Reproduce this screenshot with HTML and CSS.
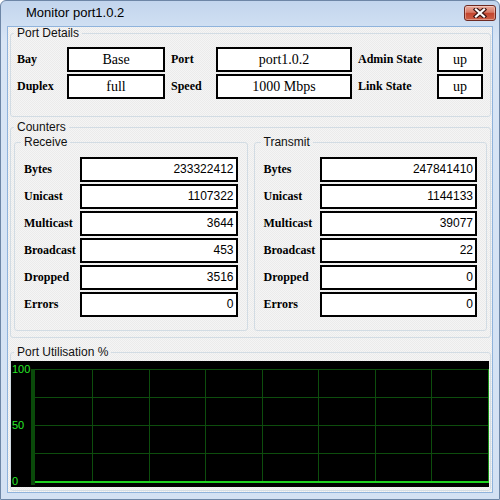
FILE: index.html
```html
<!DOCTYPE html>
<html lang="en">
<head>
    <meta charset="UTF-8">
    <title>Monitor port1.0.2</title>
    <link rel="stylesheet" href="styles.css">
</head>
<body>
    <div class="window">
        <div class="titlebar">
            <span class="title">Monitor port1.0.2</span>
            <span class="close-btn">
                <svg width="14" height="10" viewBox="0 0 14 10">
                    <path d="M3 1.5 L11 8.5 M11 1.5 L3 8.5" stroke="#3d1512" stroke-width="4.5" stroke-linecap="square"/>
                    <path d="M3 1.5 L11 8.5 M11 1.5 L3 8.5" stroke="#fff" stroke-width="2.2" stroke-linecap="square"/>
                </svg>
            </span>
        </div>

        <div class="client">
            <!-- Port Details -->
            <fieldset class="group details">
                <legend>Port Details</legend>
                <div class="details-grid">
                    <span class="label">Bay</span>
                    <span class="field">Base</span>
                    <span class="label after">Port</span>
                    <span class="field">port1.0.2</span>
                    <span class="label after">Admin State</span>
                    <span class="field">up</span>

                    <span class="label">Duplex</span>
                    <span class="field">full</span>
                    <span class="label after">Speed</span>
                    <span class="field">1000 Mbps</span>
                    <span class="label after">Link State</span>
                    <span class="field">up</span>
                </div>
            </fieldset>

            <!-- Counters -->
            <fieldset class="group counters">
                <legend>Counters</legend>
                <div class="counter-cols">
                    <fieldset class="group counter-set">
                        <legend>Receive</legend>
                        <div class="counter-grid">
                            <span class="label">Bytes</span><span class="num">233322412</span>
                            <span class="label">Unicast</span><span class="num">1107322</span>
                            <span class="label">Multicast</span><span class="num">3644</span>
                            <span class="label">Broadcast</span><span class="num">453</span>
                            <span class="label">Dropped</span><span class="num">3516</span>
                            <span class="label">Errors</span><span class="num">0</span>
                        </div>
                    </fieldset>
                    <fieldset class="group counter-set">
                        <legend>Transmit</legend>
                        <div class="counter-grid">
                            <span class="label">Bytes</span><span class="num">247841410</span>
                            <span class="label">Unicast</span><span class="num">1144133</span>
                            <span class="label">Multicast</span><span class="num">39077</span>
                            <span class="label">Broadcast</span><span class="num">22</span>
                            <span class="label">Dropped</span><span class="num">0</span>
                            <span class="label">Errors</span><span class="num">0</span>
                        </div>
                    </fieldset>
                </div>
            </fieldset>

            <!-- Utilisation chart -->
            <fieldset class="group util">
                <legend>Port Utilisation %</legend>
                <svg class="chart" width="478" height="126" viewBox="0 0 478 126">
                    <rect width="478" height="126" fill="#000"/>
                    <g stroke="#0d4d0d" stroke-width="1">
                        <path d="M24 8.5 H477 M24 36.5 H477 M24 64.5 H477 M24 92.5 H477"/>
                        <path d="M81.5 8 V120 M138.5 8 V120 M194.5 8 V120 M251.5 8 V120 M307.5 8 V120 M364.5 8 V120 M420.5 8 V120"/>
                    </g>
                    <rect x="20" y="8" width="4" height="116" fill="#0a4a0a"/>
                    <path d="M477.5 8 V122" stroke="#168f16" stroke-width="1"/>
                    <rect x="24" y="120" width="454" height="2" fill="#1fd21f"/>
                    <g class="axis-text" fill="#27e827">
                        <text x="1" y="12">100</text>
                        <text x="1" y="68">50</text>
                        <text x="1" y="124">0</text>
                    </g>
                </svg>
            </fieldset>
        </div>
    </div>
</body>
</html>
```

FILE: styles.css
```css
* {
    box-sizing: border-box;
}

body {
    margin: 0;
    background: #fff;
}

.window {
    width: 500px;
    height: 500px;
    border: 1px solid #6d86a6;
    border-radius: 6px 6px 0 0;
    background: linear-gradient(#c2d5ed, #d8e5f5 40px, #d3e1f3);
    padding: 0 6px 6px 6px;
    display: flex;
    flex-direction: column;
}

.titlebar {
    height: 25px;
    margin: 0 -6px;
    padding: 4px 3px 0 25px;
    display: flex;
    justify-content: space-between;
    align-items: flex-start;
}

.title {
    font: 13px "Liberation Sans", Arial, sans-serif;
    line-height: 16px;
    color: #000;
}

.close-btn {
    width: 32px;
    height: 16px;
    border: 1px solid #6e2a22;
    border-radius: 3px;
    background: linear-gradient(#e9ab9c, #d87a66 45%, #c4452e 52%, #cc6148);
    box-shadow: inset 0 0 0 1px rgba(255, 255, 255, 0.35);
    display: flex;
    justify-content: center;
    align-items: center;
}

.client {
    flex: 1;
    border: 1px solid #8fb3dc;
    background: repeating-conic-gradient(#ebebeb 0 25%, #f5f5f5 0 50%) 0 0 / 2px 2px;
    padding: 0 1px 1px 2px;
    display: flex;
    flex-direction: column;
}

/* group boxes */
.group {
    margin: 0;
    border: 1px solid #d2dce4;
    border-radius: 3px;
    min-width: 0;
}

.group legend {
    font: 12px "Liberation Sans", Arial, sans-serif;
    line-height: 13px;
    padding: 0 3px;
    color: #111;
}

.label {
    font: bold 12px "Liberation Serif", "Times New Roman", serif;
    color: #000;
}

/* Port Details */
.details {
    padding: 7px 6px 17px 6px;
}

.details legend {
    margin-left: -3px;
}

.details-grid {
    display: grid;
    grid-template-columns: 50px 98px 51px 136px 85px 46px;
    row-gap: 2px;
    align-items: center;
}

.details-grid .after {
    padding-left: 6px;
}

.field {
    height: 25px;
    border: 2px solid #000;
    background: #fff;
    font: 14px "Liberation Serif", "Times New Roman", serif;
    line-height: 21px;
    text-align: center;
    white-space: nowrap;
}

/* Counters */
.counters {
    margin-top: 4px;
    padding: 2px 3px 6px 3px;
}

.counter-cols {
    display: flex;
    gap: 6px;
}

.counter-set {
    flex: 1;
    padding: 8px 9px 13px 9px;
}

.counter-set legend {
    margin-left: -3px;
}

.counter-grid {
    display: grid;
    grid-template-columns: 56px 1fr;
    row-gap: 2px;
    align-items: center;
}

.num {
    height: 25px;
    border: 2px solid #000;
    background: #fff;
    font: 12px "Liberation Sans", Arial, sans-serif;
    line-height: 21px;
    text-align: right;
    padding-right: 2px;
}

/* Utilisation */
.util {
    margin-top: 8px;
    padding: 2px 0 3px 0;
}

.util legend {
    margin-left: 3px;
}

.chart {
    display: block;
}

.axis-text {
    font: 11px "Liberation Sans", Arial, sans-serif;
}
```
